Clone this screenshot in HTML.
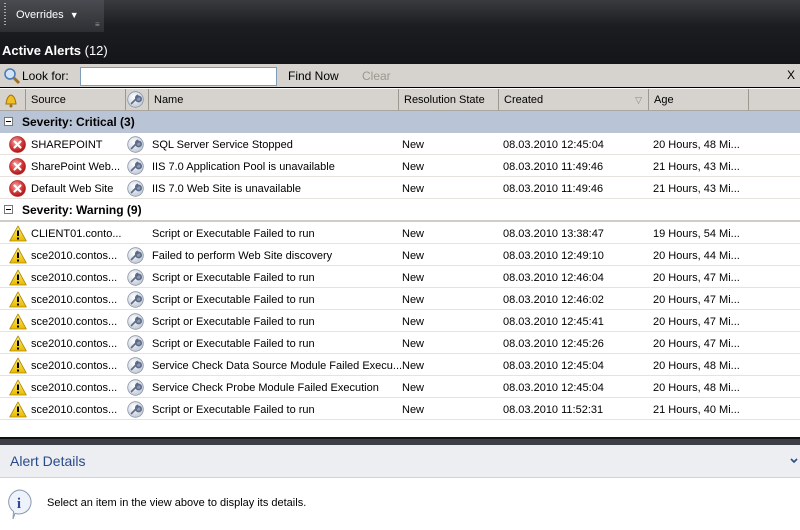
<!DOCTYPE html>
<html><head><style>
*{margin:0;padding:0;box-sizing:border-box}
body{width:800px;height:530px;overflow:hidden;background:#fff;font-family:"Liberation Sans",sans-serif;font-size:11px;color:#000;position:relative}
.top{position:absolute;left:0;top:0;width:800px;height:64px;background:linear-gradient(#3a3b3f,#1c1d20 40%,#141518)}
.tb{position:absolute;left:0;top:0;width:104px;height:32px;background:linear-gradient(#4a4b50,#2e2f33)}
.grip{position:absolute;left:4px;top:3px;width:2px;height:24px;background:repeating-linear-gradient(#aaa 0 1px,transparent 1px 3px)}
.ov{position:absolute;left:16px;top:9px;color:#fff;font-size:11px}
.title{position:absolute;left:2px;top:43px;color:#fff;font-size:13px;font-weight:bold}
.title span{font-weight:normal}
.search{position:absolute;left:0;top:64px;width:800px;height:24px;background:#d6d3ce;border-bottom:1px solid #000}
.search input{position:absolute;left:80px;top:3px;width:197px;height:19px;border:1px solid #7f9db9;background:#fff}
.hdr{position:absolute;left:0;top:89px;width:800px;height:22px;background:#d6d3ce;border-bottom:1px solid #a9a69f}
.hc{position:absolute;top:0;height:21px;line-height:23px;padding-left:5px;border-left:1px solid #9b988f}
.grp{position:absolute;left:0;width:800px;height:22px;line-height:23px;font-weight:bold;font-size:12px;padding-left:22px}
.grp i{position:absolute;left:4px;top:6px;width:9px;height:9px;border:1px solid #777;background:#fff}
.grp i:after{content:"";position:absolute;left:1px;top:3px;width:5px;height:1px;background:#000}
.row{position:absolute;left:0;width:800px;height:22px;line-height:21px;border-bottom:1px solid #e6e3de}
.row span{position:absolute;top:2px;white-space:nowrap}
.ic{position:absolute;left:9px;top:3px}
.wr{position:absolute;left:127px;top:3px}
.split{position:absolute;left:0;top:437px;width:800px;height:8px;background:linear-gradient(#111 0 2px,#3c3f46 2px)}
.det{position:absolute;left:0;top:445px;width:800px;height:33px;background:#eceef2;border-bottom:1px solid #d0d3d8;color:#2a4a8a;font-size:14px;line-height:33px;padding-left:10px}
.msg{position:absolute;left:47px;top:497px;font-size:11px}
</style></head><body>
<svg width="0" height="0" style="position:absolute">
<defs>
<radialGradient id="rg" cx="40%" cy="35%" r="65%"><stop offset="0" stop-color="#f5a8a8"/><stop offset=".6" stop-color="#d83a3a"/><stop offset="1" stop-color="#a81818"/></radialGradient>
<radialGradient id="wg" cx="40%" cy="35%" r="65%"><stop offset="0" stop-color="#fff"/><stop offset="1" stop-color="#c4ccd8"/></radialGradient>
<linearGradient id="yg" x1="0" y1="0" x2="0" y2="1"><stop offset="0" stop-color="#fff27a"/><stop offset="1" stop-color="#e8b800"/></linearGradient>
<symbol id="err" viewBox="0 0 17 17"><circle cx="8.5" cy="8.5" r="8" fill="url(#rg)" stroke="#b03030" stroke-width=".7"/><path d="M5.5 5.5L11.5 11.5M11.5 5.5L5.5 11.5" stroke="#fff" stroke-width="2.2" stroke-linecap="round"/></symbol>
<symbol id="warn" viewBox="0 0 18 17"><path d="M9 1L17.3 16H0.7Z" fill="url(#yg)" stroke="#b08a00" stroke-width=".8" stroke-linejoin="round"/><path d="M9 5.5V11" stroke="#000" stroke-width="2"/><rect x="8" y="12.5" width="2" height="2" fill="#000"/></symbol>
<symbol id="wr" viewBox="0 0 17 17"><circle cx="8.5" cy="8.5" r="7.8" fill="url(#wg)" stroke="#8a94a6" stroke-width=".8"/><path d="M4.5 12.5L9 8M9 8a2.6 2.6 0 1 0 2.6 -2.6l-1.3 1.3-1-1 1.3-1.3A2.6 2.6 0 0 0 9 8Z" stroke="#5a6a88" stroke-width="1.6" fill="#8e9ab0" stroke-linecap="round" stroke-linejoin="round"/></symbol>
</defs></svg>
<div class="top"><div class="tb"><div class="grip"></div><div class="ov">Overrides &nbsp;<span style="font-size:9px">&#9660;</span></div><div style="position:absolute;left:95px;top:20px;color:#999;font-size:8px">&#8801;</div></div>
<div class="title">Active Alerts <span>(12)</span></div></div>
<div class="search">
<svg style="position:absolute;left:3px;top:3px" width="18" height="18"><circle cx="7" cy="7" r="5" fill="#cfe4f8" stroke="#4a78b0" stroke-width="1.5"/><line x1="11" y1="11" x2="16" y2="16" stroke="#a07020" stroke-width="3"/></svg>
<span style="position:absolute;left:22px;top:5px;font-size:12px">Look for:</span>
<input>
<span style="position:absolute;left:288px;top:5px;font-size:12px">Find Now</span>
<span style="position:absolute;left:362px;top:5px;font-size:12px;color:#9a9890">Clear</span>
<span style="position:absolute;left:787px;top:4px;font-size:12px">X</span></div>
<div class="hdr">
<svg style="position:absolute;left:3px;top:3px" width="16" height="16"><path d="M3 12 Q4 4 8 3 Q12 4 13 12 Z" fill="#f0c020" stroke="#a07010"/><circle cx="8" cy="14" r="1.5" fill="#a07010"/></svg>
<div class="hc" style="left:25px;width:100px">Source</div>
<div class="hc" style="left:125px;width:23px"></div><svg class="wr" style="top:2px" width="17" height="17"><use href="#wr"/></svg>
<div class="hc" style="left:148px;width:250px">Name</div>
<div class="hc" style="left:398px;width:100px">Resolution State</div>
<div class="hc" style="left:498px;width:150px">Created<span style="position:absolute;right:6px;color:#888;font-size:9px">&#9661;</span></div>
<div class="hc" style="left:648px;width:100px">Age</div>
<div class="hc" style="left:748px;width:52px"></div></div>
<div class="grp" style="top:111px;background:#b9c5d6"><i></i>Severity: Critical (3)</div>
<div class="row" style="top:133px"><svg class="ic" width="17" height="17"><use href="#err"/></svg><span style="left:31px">SHAREPOINT</span><svg class="wr" width="17" height="17"><use href="#wr"/></svg><span style="left:152px">SQL Server Service Stopped</span><span style="left:402px">New</span><span style="left:503px">08.03.2010 12:45:04</span><span style="left:653px">20 Hours, 48 Mi...</span></div>
<div class="row" style="top:155px"><svg class="ic" width="17" height="17"><use href="#err"/></svg><span style="left:31px">SharePoint Web...</span><svg class="wr" width="17" height="17"><use href="#wr"/></svg><span style="left:152px">IIS 7.0 Application Pool is unavailable</span><span style="left:402px">New</span><span style="left:503px">08.03.2010 11:49:46</span><span style="left:653px">21 Hours, 43 Mi...</span></div>
<div class="row" style="top:177px"><svg class="ic" width="17" height="17"><use href="#err"/></svg><span style="left:31px">Default Web Site</span><svg class="wr" width="17" height="17"><use href="#wr"/></svg><span style="left:152px">IIS 7.0 Web Site is unavailable</span><span style="left:402px">New</span><span style="left:503px">08.03.2010 11:49:46</span><span style="left:653px">21 Hours, 43 Mi...</span></div>
<div class="grp" style="top:199px;border-bottom:2px solid #d0cdc8;height:23px"><i></i>Severity: Warning (9)</div>
<div class="row" style="top:222px"><svg class="ic" width="18" height="17"><use href="#warn"/></svg><span style="left:31px">CLIENT01.conto...</span><span style="left:152px">Script or Executable Failed to run</span><span style="left:402px">New</span><span style="left:503px">08.03.2010 13:38:47</span><span style="left:653px">19 Hours, 54 Mi...</span></div>
<div class="row" style="top:244px"><svg class="ic" width="18" height="17"><use href="#warn"/></svg><span style="left:31px">sce2010.contos...</span><svg class="wr" width="17" height="17"><use href="#wr"/></svg><span style="left:152px">Failed to perform Web Site discovery</span><span style="left:402px">New</span><span style="left:503px">08.03.2010 12:49:10</span><span style="left:653px">20 Hours, 44 Mi...</span></div>
<div class="row" style="top:266px"><svg class="ic" width="18" height="17"><use href="#warn"/></svg><span style="left:31px">sce2010.contos...</span><svg class="wr" width="17" height="17"><use href="#wr"/></svg><span style="left:152px">Script or Executable Failed to run</span><span style="left:402px">New</span><span style="left:503px">08.03.2010 12:46:04</span><span style="left:653px">20 Hours, 47 Mi...</span></div>
<div class="row" style="top:288px"><svg class="ic" width="18" height="17"><use href="#warn"/></svg><span style="left:31px">sce2010.contos...</span><svg class="wr" width="17" height="17"><use href="#wr"/></svg><span style="left:152px">Script or Executable Failed to run</span><span style="left:402px">New</span><span style="left:503px">08.03.2010 12:46:02</span><span style="left:653px">20 Hours, 47 Mi...</span></div>
<div class="row" style="top:310px"><svg class="ic" width="18" height="17"><use href="#warn"/></svg><span style="left:31px">sce2010.contos...</span><svg class="wr" width="17" height="17"><use href="#wr"/></svg><span style="left:152px">Script or Executable Failed to run</span><span style="left:402px">New</span><span style="left:503px">08.03.2010 12:45:41</span><span style="left:653px">20 Hours, 47 Mi...</span></div>
<div class="row" style="top:332px"><svg class="ic" width="18" height="17"><use href="#warn"/></svg><span style="left:31px">sce2010.contos...</span><svg class="wr" width="17" height="17"><use href="#wr"/></svg><span style="left:152px">Script or Executable Failed to run</span><span style="left:402px">New</span><span style="left:503px">08.03.2010 12:45:26</span><span style="left:653px">20 Hours, 47 Mi...</span></div>
<div class="row" style="top:354px"><svg class="ic" width="18" height="17"><use href="#warn"/></svg><span style="left:31px">sce2010.contos...</span><svg class="wr" width="17" height="17"><use href="#wr"/></svg><span style="left:152px">Service Check Data Source Module Failed Execu...</span><span style="left:402px">New</span><span style="left:503px">08.03.2010 12:45:04</span><span style="left:653px">20 Hours, 48 Mi...</span></div>
<div class="row" style="top:376px"><svg class="ic" width="18" height="17"><use href="#warn"/></svg><span style="left:31px">sce2010.contos...</span><svg class="wr" width="17" height="17"><use href="#wr"/></svg><span style="left:152px">Service Check Probe Module Failed Execution</span><span style="left:402px">New</span><span style="left:503px">08.03.2010 12:45:04</span><span style="left:653px">20 Hours, 48 Mi...</span></div>
<div class="row" style="top:398px"><svg class="ic" width="18" height="17"><use href="#warn"/></svg><span style="left:31px">sce2010.contos...</span><svg class="wr" width="17" height="17"><use href="#wr"/></svg><span style="left:152px">Script or Executable Failed to run</span><span style="left:402px">New</span><span style="left:503px">08.03.2010 11:52:31</span><span style="left:653px">21 Hours, 40 Mi...</span></div>
<div class="split"></div>
<div class="det">Alert Details<svg style="position:absolute;right:2px;top:13px" width="8" height="6"><path d="M1 1L4 4L7 1" stroke="#2a4a8a" stroke-width="1.6" fill="none"/></svg></div>
<svg style="position:absolute;left:6px;top:489px" width="28" height="32"><path d="M13 1a12 12 0 1 1 -4 23.3L7 30 7.5 22.5A12 12 0 0 1 13 1Z" fill="#eef2fa" stroke="#8a98b0"/><text x="13" y="19" text-anchor="middle" font-family="Liberation Serif,serif" font-weight="bold" font-size="15" fill="#2a4a9a">i</text></svg>
<div class="msg">Select an item in the view above to display its details.</div>
</body></html>
